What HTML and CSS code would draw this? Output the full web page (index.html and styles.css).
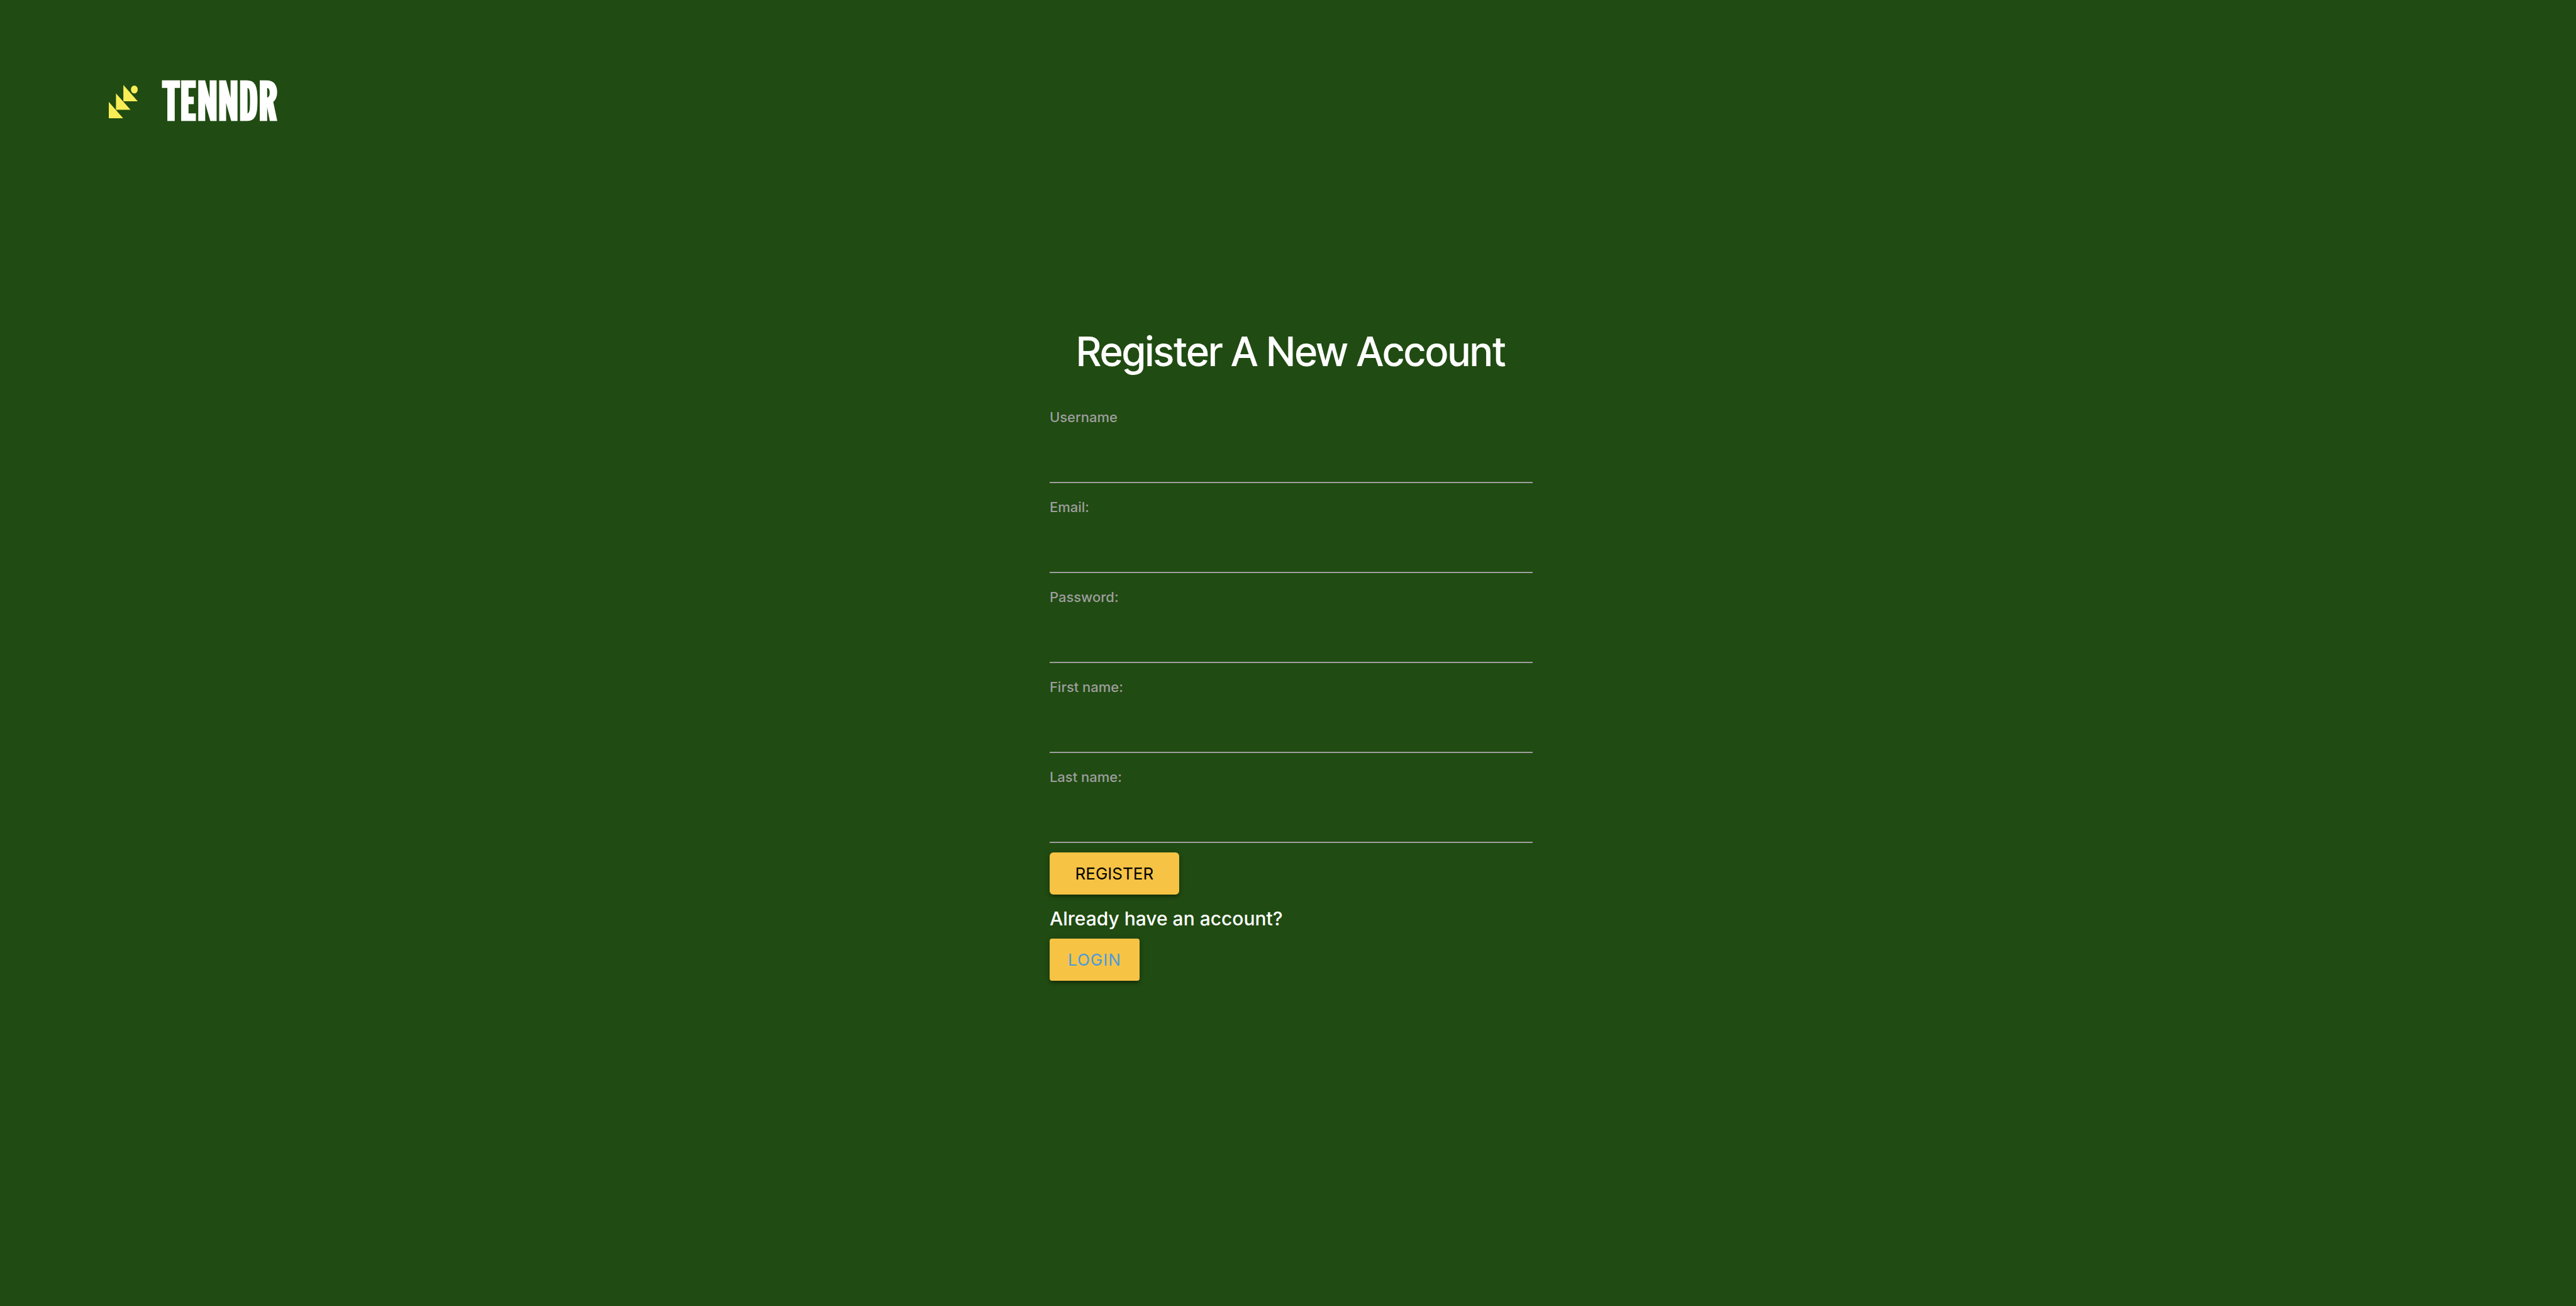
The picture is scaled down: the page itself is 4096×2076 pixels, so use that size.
FILE: index.html
```html
<!DOCTYPE html>
<html lang="en">
<head>
  <meta charset="utf-8">
  <title>Tenndr</title>
  <link rel="stylesheet" href="styles.css">
</head>
<body>
  <header class="site-header">
    <a class="brand" href="#">
      <svg class="brand-mark" viewBox="0 0 145 169" preserveAspectRatio="none" aria-hidden="true">
        <path d="M0 86V169H72ZM36 43V126H109ZM73 0V83H145Z"/>
        <ellipse cx="128" cy="23" rx="17" ry="20"/>
      </svg>
      <span class="brand-name">TENNDR</span>
    </a>
  </header>
  <main class="register">
    <h1 class="title">Register A New Account</h1>
    <form class="form">
      <div class="field">
        <label for="username">Username</label>
        <input id="username" type="text">
      </div>
      <div class="field">
        <label for="email">Email:</label>
        <input id="email" type="email">
      </div>
      <div class="field">
        <label for="password">Password:</label>
        <input id="password" type="password">
      </div>
      <div class="field">
        <label for="first-name">First name:</label>
        <input id="first-name" type="text">
      </div>
      <div class="field">
        <label for="last-name">Last name:</label>
        <input id="last-name" type="text">
      </div>
      <button class="btn btn-register" type="submit">REGISTER</button>
    </form>
    <p class="prompt">Already have an account?</p>
    <a class="btn btn-login" href="#">LOGIN</a>
  </main>
</body>
</html>
```

FILE: styles.css
```css
* {
  box-sizing: border-box;
}

body {
  margin: 0;
  min-height: 100vh;
  background: #204b12;
  color: #fff;
  font-family: Inter, "Liberation Sans", sans-serif;
}

.site-header {
  display: flex;
  align-items: center;
  height: 322px;
  padding: 0 173px;
}

.brand {
  display: flex;
  align-items: center;
  gap: 39px;
  color: #fff;
  text-decoration: none;
}

.brand-mark {
  width: 46px;
  height: 53px;
  fill: #f8ed56;
}

.brand-name {
  font-family: "League Gothic", Anton, Impact, sans-serif;
  font-size: 84px;
  font-weight: 700;
  line-height: 80px;
}

.register {
  display: flex;
  flex-direction: column;
  align-items: flex-start;
  width: 19%;
  min-width: 768px;
  margin: 197px auto 0;
  padding-left: 10px;
}

.title {
  align-self: center;
  margin: 0 0 41px;
  font-family: "Inter Tight", "Liberation Sans", sans-serif;
  font-size: 64px;
  font-weight: 500;
  line-height: 80px;
  white-space: nowrap;
}

.form {
  width: 100%;
}

.field {
  display: flex;
  flex-direction: column;
  height: 143px;
}

.field label {
  color: #9e9e9e;
  font-size: 22px;
  font-weight: 500;
  line-height: 46px;
}

.field input {
  width: 100%;
  height: 82px;
  padding: 0;
  border: 0;
  border-bottom: 2px solid #9e9e9e;
  background: transparent;
  color: #fff;
  font: inherit;
  font-size: 30px;
  outline: none;
}

.btn {
  display: block;
  height: 67px;
  padding: 0;
  border: 0;
  background: #f6c344;
  font-family: inherit;
  font-size: 26px;
  line-height: 67px;
  text-align: center;
  text-decoration: none;
  box-shadow: 0 4px 4px rgba(0, 0, 0, 0.14), 0 6px 2px -4px rgba(0, 0, 0, 0.12), 0 2px 10px rgba(0, 0, 0, 0.2);
}

.btn-register {
  width: 206px;
  border-radius: 6px;
  color: #000;
}

.prompt {
  margin: 16px 0 10px;
  font-size: 30px;
  font-weight: 500;
  line-height: 44px;
}

.btn-login {
  width: 143px;
  border-radius: 4px;
  color: #469be0;
  letter-spacing: 1px;
}
```
